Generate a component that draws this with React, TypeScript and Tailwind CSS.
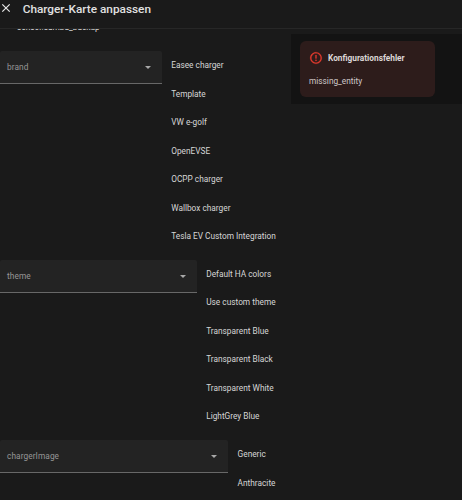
type SelectGroup = {
    label: string;
    boxWidth: string;
    options: string[];
};

const groups: SelectGroup[] = [
    {
        label: "brand",
        boxWidth: "w-[162px]",
        options: [
            "Easee charger",
            "Template",
            "VW e-golf",
            "OpenEVSE",
            "OCPP charger",
            "Wallbox charger",
            "Tesla EV Custom Integration",
        ],
    },
    {
        label: "theme",
        boxWidth: "w-[197px]",
        options: [
            "Default HA colors",
            "Use custom theme",
            "Transparent Blue",
            "Transparent Black",
            "Transparent White",
            "LightGrey Blue",
        ],
    },
    {
        label: "chargerImage",
        boxWidth: "w-[228.4px]",
        options: ["Generic", "Anthracite"],
    },
];

function SelectRow({ label, boxWidth, options }: SelectGroup) {
    return (
        <div className="flex items-start">
            <button
                type="button"
                className={`flex h-[33px] shrink-0 items-center justify-between rounded-t-[2px] border-b border-[#686868] bg-[#232323] pt-[1px] pr-[11.5px] pl-[7px] ${boxWidth}`}
            >
                <span className="text-[8.3px] tracking-[0.08px] text-[#969696]">{label}</span>
                <svg viewBox="0 0 6 3" className="h-[3px] w-[6px] fill-[#a8a8a8]">
                    <path d="M0 0h6L3 3z" />
                </svg>
            </button>
            <ul className="ml-[9.2px]">
                {options.map((option) => (
                    <li
                        key={option}
                        className="flex h-[28.5px] items-center text-[8.3px] whitespace-nowrap text-[#d6d6d6]"
                    >
                        {option}
                    </li>
                ))}
            </ul>
        </div>
    );
}

function ErrorCard() {
    return (
        <div className="h-[56px] w-[135.5px] rounded-[6px] bg-[#2d1c1b] px-[9.5px] pt-[10px] text-[#dcd6d6]">
            <div className="flex h-[14px] items-center gap-[5px]">
                <svg viewBox="0 0 24 24" className="size-[14px] fill-[#e53b2e] stroke-[#e53b2e] stroke-[0.4]">
                    <path d="M11 15h2v2h-2v-2m0-8h2v6h-2V7m1-5C6.47 2 2 6.5 2 12a10 10 0 0 0 10 10 10 10 0 0 0 10-10A10 10 0 0 0 12 2m0 18a8 8 0 0 1-8-8 8 8 0 0 1 8-8 8 8 0 0 1 8 8 8 8 0 0 1-8 8z" />
                </svg>
                <span className="text-[8.3px] font-bold">Konfigurationsfehler</span>
            </div>
            <p className="mt-[9px] text-[8.3px] leading-[14px] text-[#cfc8c8]">missing_entity</p>
        </div>
    );
}

export default function App() {
    return (
        <div className="flex h-[500px] w-[462px] flex-col overflow-hidden bg-[#1a1a1a] font-[Roboto,sans-serif]">
            <header className="flex h-[29px] shrink-0 items-start border-b border-[#272727] pt-[2px]">
                <button type="button" className="mt-[1.3px] ml-[1px] size-[10px]">
                    <svg viewBox="0 0 10 10" className="size-[10px] fill-none stroke-[#e8e8e8]">
                        <path d="M1.3 1.3l7.4 7.4M8.7 1.3L1.3 8.7" strokeWidth="1.2" />
                    </svg>
                </button>
                <h1 className="ml-[11.7px] text-[11.8px] leading-[14px] font-medium text-[#e1e1e1]">
                    Charger-Karte anpassen
                </h1>
            </header>
            <main className="flex min-h-0 grow overflow-hidden">
                <div className="w-[291px] shrink-0 overflow-hidden">
                    <p className="-mt-[8px] h-[30px] pl-[17px] text-[8.3px] leading-[12px] text-[#dedede]">
                        sensor.samba_backup
                    </p>
                    <div className="flex flex-col gap-[9.3px]">
                        {groups.map((group) => (
                            <SelectRow key={group.label} {...group} />
                        ))}
                    </div>
                </div>
                <aside className="mt-[5px] h-[70px] grow bg-[#131313] pt-[7px] pl-[8.5px]">
                    <ErrorCard />
                </aside>
            </main>
        </div>
    );
}
